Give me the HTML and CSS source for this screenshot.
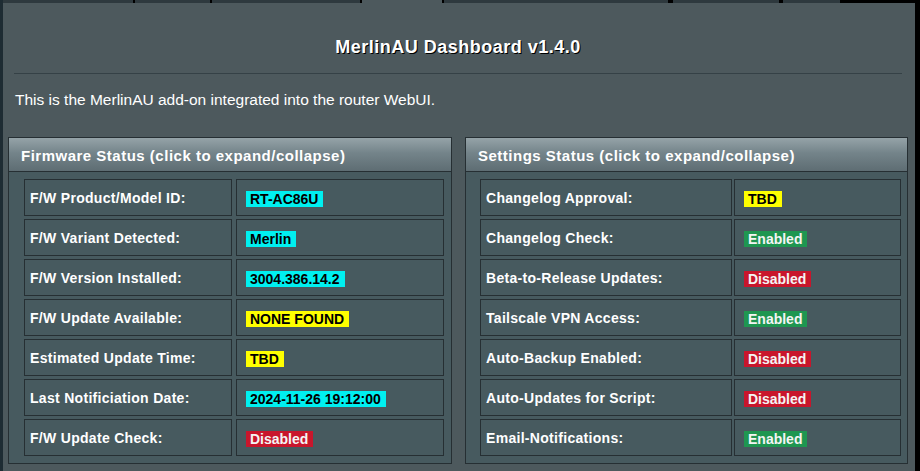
FILE: index.html
```html
<!DOCTYPE html>
<html>
<head>
<meta charset="utf-8">
<link rel="stylesheet" href="styles.css">
</head>
<body>
<div class="page">
  <div class="edge"></div>
  <div class="main">
    <div class="tabs">
      <span class="tab" style="width:130px"></span><span class="sep" style="width:2px"></span>
      <span class="tab" style="width:75px"></span><span class="sep" style="width:2px"></span>
      <span class="tab" style="width:148px"></span><span class="sep" style="width:2px"></span>
      <span class="tab active" style="width:80px"></span><span class="sep" style="width:2px"></span>
      <span class="tab" style="width:224px"></span><span class="sep" style="width:5px"></span>
      <span class="tab" style="width:106px"></span><span class="sep" style="width:4px"></span>
      <span class="tab" style="width:57px"></span>
    </div>
    <div class="panel">
      <h1 class="title">MerlinAU Dashboard v1.4.0</h1>
      <div class="rule"></div>
      <p class="desc">This is the MerlinAU add-on integrated into the router WebUI.</p>
      <div class="sections">
        <div class="section">
          <div class="sec-head">Firmware Status (click to expand/collapse)</div>
          <div class="sec-body fw">
            <div class="cell label">F/W Product/Model ID:</div><div class="cell value"><span class="badge cyan">RT-AC86U</span></div>
            <div class="cell label">F/W Variant Detected:</div><div class="cell value"><span class="badge cyan">Merlin</span></div>
            <div class="cell label">F/W Version Installed:</div><div class="cell value"><span class="badge cyan">3004.386.14.2</span></div>
            <div class="cell label">F/W Update Available:</div><div class="cell value"><span class="badge yellow">NONE FOUND</span></div>
            <div class="cell label">Estimated Update Time:</div><div class="cell value"><span class="badge yellow">TBD</span></div>
            <div class="cell label">Last Notificiation Date:</div><div class="cell value"><span class="badge cyan">2024-11-26 19:12:00</span></div>
            <div class="cell label">F/W Update Check:</div><div class="cell value"><span class="badge red">Disabled</span></div>
          </div>
        </div>
        <div class="section">
          <div class="sec-head">Settings Status (click to expand/collapse)</div>
          <div class="sec-body st">
            <div class="cell label">Changelog Approval:</div><div class="cell value"><span class="badge yellow">TBD</span></div>
            <div class="cell label">Changelog Check:</div><div class="cell value"><span class="badge green">Enabled</span></div>
            <div class="cell label">Beta-to-Release Updates:</div><div class="cell value"><span class="badge red">Disabled</span></div>
            <div class="cell label">Tailscale VPN Access:</div><div class="cell value"><span class="badge green">Enabled</span></div>
            <div class="cell label">Auto-Backup Enabled:</div><div class="cell value"><span class="badge red">Disabled</span></div>
            <div class="cell label">Auto-Updates for Script:</div><div class="cell value"><span class="badge red">Disabled</span></div>
            <div class="cell label">Email-Notifications:</div><div class="cell value"><span class="badge green">Enabled</span></div>
          </div>
        </div>
      </div>
    </div>
  </div>
</div>
</body>
</html>
```
FILE: styles.css
```css
html, body {
  margin: 0;
  padding: 0;
  background: #000;
  height: 100%;
  overflow: hidden;
  font-family: "Liberation Sans", Arial, sans-serif;
  color: #fff;
}
.page {
  display: flex;
  height: 471px;
}
.edge {
  width: 3px;
  background: #1e2c33;
}
.main {
  width: 912px;
  display: flex;
  flex-direction: column;
}
.tabs {
  display: flex;
  height: 3px;
  background: #000;
}
.tab {
  display: block;
  height: 3px;
  background: #2e393e;
}
.tab.active {
  background: #4d595d;
}
.sep {
  display: block;
  height: 3px;
  background: #000;
}
.panel {
  flex: 1;
  background: #4d595d;
  padding: 0 7px 0 5px;
}
.title {
  margin: 33px 0 0;
  font-size: 18px;
  line-height: 22px;
  font-weight: bold;
  letter-spacing: 0.5px;
  text-align: center;
  color: #fff;
  text-shadow: 1px 1px 0 #000;
}
.rule {
  margin: 15px 6px 0 6px;
  border-top: 1px solid #354146;
}
.desc {
  margin: 16px 0 0 7px;
  font-size: 15.5px;
  line-height: 20px;
  color: #fff;
}
.sections {
  display: grid;
  grid-template-columns: 444px 443px;
  column-gap: 13px;
  margin-top: 27px;
}
.section {
  border: 1px solid #262f33;
  background: #475a5f;
}
.sec-head {
  height: 30px;
  padding: 3px 0 0 12px;
  line-height: 30px;
  font-size: 15px;
  font-weight: bold;
  letter-spacing: 0.5px;
  color: #fff;
  background: linear-gradient(to bottom, #95a3a8 0%, #74848a 45%, #5e6d73 100%);
  border-bottom: 1px solid #262f33;
}
.sec-body {
  display: grid;
  row-gap: 3px;
  padding: 7px 7px 7px 15px;
}
.sec-body.fw {
  grid-template-columns: 208px 208px;
  column-gap: 4px;
}
.sec-body.st {
  padding-left: 14px;
  padding-right: 6px;
  grid-template-columns: 252px 167px;
  column-gap: 2px;
}
.cell {
  height: 35px;
  border: 1px solid #262f33;
  display: flex;
  align-items: center;
  font-size: 14px;
  font-weight: bold;
}
.label {
  padding-left: 5px;
  letter-spacing: 0.3px;
  color: #fff;
}
.value {
  padding-left: 9px;
  padding-top: 2px;
  height: 33px;
}
.badge {
  display: inline-block;
  line-height: 16px;
  padding: 0 5px 0 4px;
  font-size: 14px;
  font-weight: bold;
}
.cyan { background: #00f0f0; color: #000; }
.yellow { background: #ffff00; color: #000; }
.red { background: #c8162c; color: #f4f4f4; }
.green { background: #1f9651; color: #f4f4f4; }
```
